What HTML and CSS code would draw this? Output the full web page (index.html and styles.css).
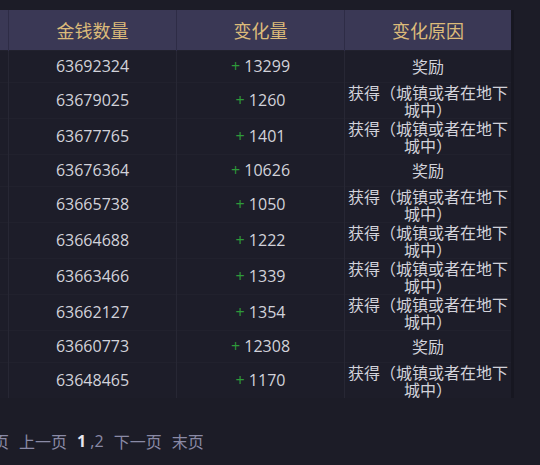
FILE: index.html
```html
<!DOCTYPE html>
<html lang="zh">
<head>
<meta charset="utf-8">
<link rel="stylesheet" href="styles.css">
</head>
<body>
<div class="page">
  <table class="log">
    <colgroup><col class="c"><col class="c"><col class="c"><col class="c"></colgroup>
    <thead>
      <tr><th>时间</th><th>金钱数量</th><th>变化量</th><th>变化原因</th></tr>
    </thead>
    <tbody>
      <tr class="one"><td></td><td>63692324</td><td><span class="plus">+</span> 13299</td><td>奖励</td></tr>
      <tr><td></td><td>63679025</td><td><span class="plus">+</span> 1260</td><td>获得（城镇或者在地下城中）</td></tr>
      <tr><td></td><td>63677765</td><td><span class="plus">+</span> 1401</td><td>获得（城镇或者在地下城中）</td></tr>
      <tr class="one"><td></td><td>63676364</td><td><span class="plus">+</span> 10626</td><td>奖励</td></tr>
      <tr><td></td><td>63665738</td><td><span class="plus">+</span> 1050</td><td>获得（城镇或者在地下城中）</td></tr>
      <tr><td></td><td>63664688</td><td><span class="plus">+</span> 1222</td><td>获得（城镇或者在地下城中）</td></tr>
      <tr><td></td><td>63663466</td><td><span class="plus">+</span> 1339</td><td>获得（城镇或者在地下城中）</td></tr>
      <tr><td></td><td>63662127</td><td><span class="plus">+</span> 1354</td><td>获得（城镇或者在地下城中）</td></tr>
      <tr class="one"><td></td><td>63660773</td><td><span class="plus">+</span> 12308</td><td>奖励</td></tr>
      <tr><td></td><td>63648465</td><td><span class="plus">+</span> 1170</td><td>获得（城镇或者在地下城中）</td></tr>
    </tbody>
  </table>
  <div class="pager">
    <a>首页</a><a>上一页</a><span class="nums"><b>1</b> ,<a>2</a></span><a>下一页</a><a>末页</a>
  </div>
</div>
</body>
</html>
```

FILE: styles.css
```css
html, body {
  margin: 0;
  padding: 0;
  background: #1c1c27;
  overflow: hidden;
}
.page {
  margin-left: -160px;
  padding-top: 10px;
  font-family: "Open Sans", "Noto Sans CJK SC", sans-serif;
  color: #d2d2da;
}
.log {
  border-collapse: collapse;
  table-layout: fixed;
  width: 672px;
  background: #1d1d29;
  border-right: 3px solid #171721;
}
.log col.c {
  width: 168px;
}
.log th {
  height: 40px;
  padding: 0;
  background: #3a3855;
  color: #dcbb7a;
  font-size: 18px;
  font-weight: normal;
  font-family: "Noto Sans CJK SC", sans-serif;
  border-left: 1px solid #2e2c46;
}
.log td {
  height: 35px;
  padding: 0 5px;
  text-align: center;
  font-size: 16px;
  line-height: 17px;
  border-left: 1px solid #272734;
  border-top: 1px solid #21212d;
}
.log tr.one td {
  height: 31px;
}
.log td:last-child {
  font-family: "Noto Sans CJK SC", sans-serif;
  padding: 0 3px;
}
.plus {
  color: #2e9a3a;
}
.pager {
  margin-top: 31px;
  display: flex;
  align-items: center;
  gap: 10px;
  padding-left: 137px;
  font-family: "Noto Sans CJK SC", sans-serif;
  font-size: 16px;
  color: #8a8aa6;
}
.pager b {
  color: #e6e6ee;
  font-family: "Open Sans", sans-serif;
}
.pager .nums {
  font-family: "Open Sans", sans-serif;
}
```
